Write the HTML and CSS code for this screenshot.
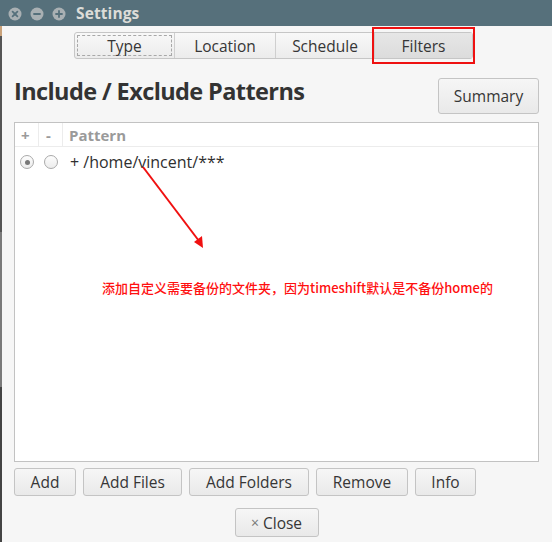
FILE: index.html
```html
<!DOCTYPE html>
<html>
<head>
<meta charset="utf-8">
<link rel="stylesheet" href="styles.css">
</head>
<body>
<div class="titlebar">
  <div class="winbtns">
    <svg class="wb" viewBox="0 0 14 14"><circle cx="7" cy="7" r="6.5" fill="#a9b0b3"/><path d="M4.6 4.6 L9.4 9.4 M9.4 4.6 L4.6 9.4" stroke="#56707b" stroke-width="1.8" stroke-linecap="round"/></svg>
    <svg class="wb" viewBox="0 0 14 14"><circle cx="7" cy="7" r="6.5" fill="#a9b0b3"/><path d="M4 7 H10" stroke="#56707b" stroke-width="1.8" stroke-linecap="round"/></svg>
    <svg class="wb" viewBox="0 0 14 14"><circle cx="7" cy="7" r="6.5" fill="#a9b0b3"/><path d="M4 7 H10 M7 4 V10" stroke="#56707b" stroke-width="1.8" stroke-linecap="round"/></svg>
  </div>
  <div class="title">Settings</div>
</div>
<div class="window">
  <div class="edge"></div>
  <div class="content">
    <div class="tabs-row">
      <div class="tabs">
        <div class="tab tab-type"><span class="focus">Type</span></div>
        <div class="tab tab-loc">Location</div>
        <div class="tab tab-sched">Schedule</div>
        <div class="tab tab-filters active">Filters</div>
      </div>
    </div>
    <div class="head-row">
      <h1 class="heading">Include / Exclude Patterns</h1>
      <div class="btn summary">Summary</div>
    </div>
    <div class="list">
      <div class="list-head">
        <div class="col c-plus">+</div>
        <div class="col c-minus">-</div>
        <div class="col c-pat">Pattern</div>
      </div>
      <div class="list-row">
        <div class="cell c-plus"><span class="radio checked"></span></div>
        <div class="cell c-minus"><span class="radio"></span></div>
        <div class="cell c-pat">+ /home/vincent/***</div>
      </div>
    </div>
    <div class="btn-row">
      <div class="btn b-add">Add</div>
      <div class="btn b-files">Add Files</div>
      <div class="btn b-folders">Add Folders</div>
      <div class="btn b-remove">Remove</div>
      <div class="btn b-info">Info</div>
    </div>
    <div class="close-row">
      <div class="btn b-close"><span class="x">×</span> Close</div>
    </div>
  </div>
</div>
<svg class="arrow" width="552" height="542" viewBox="0 0 552 542">
  <line x1="143" y1="167" x2="199" y2="241" stroke="#f01010" stroke-width="2"/>
  <polygon points="203,248 194,242 202,236" fill="#f01010"/>
</svg>
<div class="note">添加自定义需要备份的文件夹，因为timeshift默认是不备份home的</div>
</body>
</html>
```
FILE: styles.css
```css
* { box-sizing: border-box; }
html, body { margin: 0; padding: 0; }
body {
  width: 552px;
  height: 542px;
  overflow: hidden;
  background: #f6f6f6;
  font-family: "Open Sans", "Noto Sans", sans-serif;
  color: #363636;
  position: relative;
}
.titlebar {
  height: 26px;
  background: #56707b;
  display: flex;
  align-items: center;
}
.winbtns {
  display: flex;
  gap: 8px;
  padding-left: 8px;
  margin-top: 1px;
}
.wb { width: 14px; height: 14px; display: block; }
.title {
  margin-left: 10px;
  color: #dcdcd8;
  font-weight: bold;
  font-size: 15.5px;
  letter-spacing: 0.1px;
}
.window {
  display: flex;
  height: 516px;
}
.edge {
  width: 2px;
  background: linear-gradient(#c9a27a 0 10px, #555 10px 40%, #7a7a7a 40% 70%, #444 70%);
}
.content {
  flex: 1;
  padding: 0 13px 0 12px;
}
.tabs-row {
  display: flex;
  padding-left: 60px;
  margin-top: 6px;
}
.tabs {
  display: flex;
  height: 27px;
  border: 1px solid #c6c6c6;
  border-radius: 3px;
  background: linear-gradient(#f8f8f8, #ececec);
  position: relative;
}
.tab {
  display: flex;
  align-items: center;
  justify-content: center;
  font-size: 15.5px;
  border-left: 1px solid #cfcfcf;
  position: relative;
}
.tab:first-child { border-left: none; }
.tab-type { width: 99px; padding: 2px; }
.tab-loc { width: 101px; }
.tab-sched { width: 99px; }
.tab-filters { width: 98px; }
.focus {
  display: flex;
  align-items: center;
  justify-content: center;
  width: 100%;
  height: 100%;
  border: 1px dashed #a8a8a8;
}
.tab.active {
  background: linear-gradient(#e6e6e6, #dcdcdc);
}
.tab.active::after {
  content: "";
  position: absolute;
  left: -3px;
  right: -3px;
  top: -6px;
  bottom: -6px;
  border: 2px solid #ee1111;
}
.head-row {
  display: flex;
  justify-content: space-between;
  margin-top: 19px;
  height: 36px;
}
.heading {
  margin: 0;
  font-size: 23.5px;
  font-weight: bold;
  color: #333;
  line-height: 36px;
  margin-top: -5px;
  letter-spacing: -0.6px;
}
.btn {
  display: flex;
  align-items: center;
  justify-content: center;
  border: 1px solid #c4c4c4;
  border-radius: 3px;
  background: linear-gradient(#f6f6f6, #e9e9e9);
  font-size: 15.5px;
  color: #363636;
}
.summary { width: 101px; height: 36px; }
.list {
  margin-top: 8px;
  height: 340px;
  border: 1px solid #c2c2c2;
  background: #fff;
}
.list-head {
  display: flex;
  height: 24px;
  border-bottom: 1px solid #ececec;
  align-items: stretch;
}
.col {
  display: flex;
  align-items: center;
  font-size: 15px;
  font-weight: bold;
  color: #9a9a9a;
}
.c-plus { width: 23px; padding-left: 6px; }
.c-minus { width: 24px; padding-left: 7px; border-left: 1px solid #ececec; }
.c-pat { padding-left: 6px; border-left: 1px solid #ececec; }
.list-row {
  display: flex;
  height: 30px;
  align-items: center;
}
.list-row .cell { border-left: none; display: flex; align-items: center; }
.list-row .c-plus { padding-left: 5px; }
.list-row .c-minus { padding-left: 6px; }
.list-row .c-pat { font-size: 16px; color: #2f2f2f; padding-left: 8px; }
.radio {
  width: 14px;
  height: 14px;
  border-radius: 50%;
  border: 1px solid #a9a9a9;
  background: linear-gradient(#fdfdfd, #ececec);
  position: relative;
  display: block;
}
.radio.checked::after {
  content: "";
  position: absolute;
  left: 3.5px;
  top: 3.5px;
  width: 5px;
  height: 5px;
  border-radius: 50%;
  background: #777;
}
.btn-row {
  display: flex;
  margin-top: 6px;
  height: 28px;
}
.btn-row .btn { height: 28px; margin-right: 7px; }
.b-add { width: 62px; }
.b-files { width: 99px; }
.b-folders { width: 120px; }
.b-remove { width: 92px; }
.b-info { width: 61px; }
.close-row {
  display: flex;
  justify-content: center;
  margin-top: 12px;
}
.b-close { width: 84px; height: 29px; }
.x { color: #777; font-size: 14px; margin-right: 4px; }
.arrow {
  position: absolute;
  left: 0;
  top: 0;
  pointer-events: none;
}
.note {
  position: absolute;
  left: 102px;
  top: 278px;
  font-family: "Noto Sans CJK SC", "Open Sans", sans-serif;
  font-size: 13px;
  font-weight: 500;
  color: #ff1010;
  white-space: nowrap;
}
```
